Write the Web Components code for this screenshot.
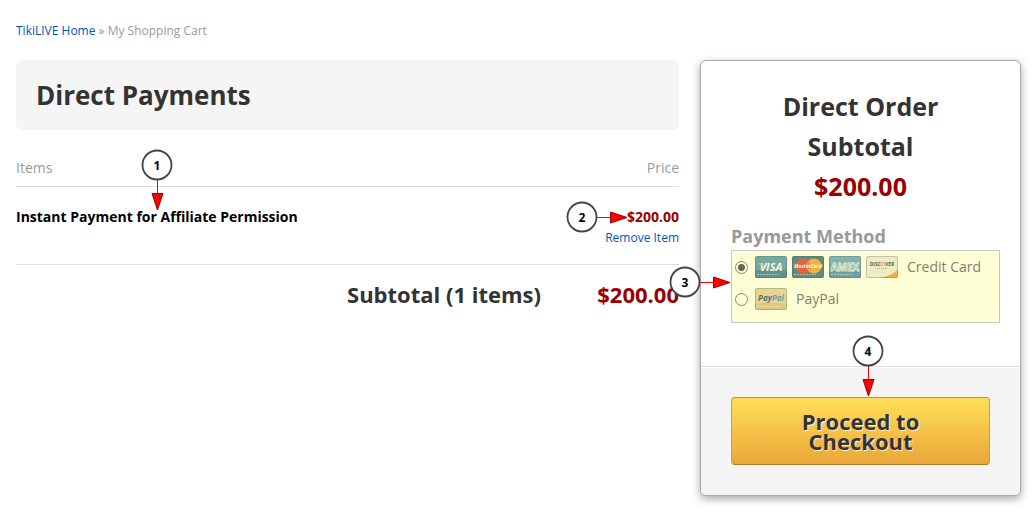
<!DOCTYPE html>
<html lang="en">
<head>
<meta charset="utf-8">
<title>My Shopping Cart</title>
<style>
body { margin: 0; background: #fff; color: #333; font: 14px/20px "Open Sans", sans-serif; }
</style>
</head>
<body>
<cart-page>
  <bread-crumb slot="crumbs"></bread-crumb>
  <cart-heading slot="main">Direct Payments</cart-heading>
  <cart-items slot="main"></cart-items>
  <order-summary slot="aside"></order-summary>
</cart-page>
<script>
function define(name, html) {
  const template = document.createElement('template');
  template.innerHTML = html;
  customElements.define(name, class extends HTMLElement {
    constructor() {
      super();
      this.attachShadow({ mode: 'open' }).append(template.content.cloneNode(true));
    }
  });
}

define('cart-page', `
<style>
  :host { display: block; padding: 21px 12px 24px 16px; }
  .columns { display: grid; grid-template-columns: minmax(0, 1fr) 321px; gap: 21px; align-items: start; margin-top: 19px; }
</style>
<slot name="crumbs"></slot>
<div class="columns"><main><slot name="main"></slot></main><aside><slot name="aside"></slot></aside></div>`);

define('bread-crumb', `
<style>
  :host { display: block; font-size: 12px; line-height: 20px; color: #999; }
  a { color: #0055bb; text-decoration: none; }
</style>
<nav aria-label="Breadcrumb"><a href="#home">TikiLIVE Home</a> » My Shopping Cart</nav>`);

define('cart-heading', `
<style>
  :host { display: block; background: #f5f5f5; border-radius: 6px; padding: 15px 20px; }
  h1 { margin: 0; font-size: 26px; line-height: 40px; color: #333; }
</style>
<h1><slot></slot></h1>`);

/* Numbered marker with an arrow that points down or right */
customElements.define('step-callout', class extends HTMLElement {
  constructor() {
    super();
    const down = this.getAttribute('direction') === 'down';
    const arrow = down
      ? '<path d="M16.500 31V46" stroke="#f00"/><path d="M11 44.500H22L16.500 61Z" fill="#f00" stroke="#900"/>'
      : '<path d="M31 16.500H46" stroke="#f00"/><path d="M44.500 11V22L61 16.500Z" fill="#f00" stroke="#900"/>';
    this.attachShadow({ mode: 'open' }).innerHTML = `
      <style>
        :host { display: block; position: absolute; z-index: 2; pointer-events: none; }
        svg { display: block; }
        text { font: bold 12px "Open Sans", sans-serif; fill: #000; }
      </style>
      <svg width="${down ? 32 : 62}" height="${down ? 62 : 32}">
        ${arrow}
        <circle cx="16" cy="16" r="14.500" fill="#fff" stroke="#444" stroke-width="1.800"/>
        <text x="16" y="21" text-anchor="middle">${this.getAttribute('step')}</text>
      </svg>`;
  }
});

define('cart-items', `
<style>
  :host { display: block; margin-top: 28px; }
  table { width: 100%; border-collapse: collapse; }
  th, td { padding: 0; text-align: left; vertical-align: top; }
  .num { text-align: right; }
  thead th { font-weight: 400; color: #999; padding-bottom: 8px; border-bottom: 1px solid #ddd; }
  tbody th, tbody td { position: relative; padding: 20px 0 15px; border-bottom: 1px solid #ddd; }
  tbody th { color: #000; }
  .price { font-weight: 700; color: #900; }
  .remove { display: block; font-size: 12px; line-height: 22px; color: #0055bb; text-decoration: none; }
  tfoot th, tfoot td { font-size: 22px; line-height: 30px; padding-top: 14px; text-align: right; }
  tfoot th { padding-right: 40px; }
  .total { width: 98px; }
  .first { left: 125px; top: -38px; }
  .second { right: 51px; top: 14px; }
</style>
<table>
  <thead><tr><th scope="col">Items</th><th scope="col" class="num total">Price</th></tr></thead>
  <tbody><tr>
    <th scope="row">Instant Payment for Affiliate Permission<step-callout class="first" step="1" direction="down"></step-callout></th>
    <td class="num"><span class="price">$200.00</span><a class="remove" href="#remove">Remove Item</a><step-callout class="second" step="2" direction="right"></step-callout></td>
  </tr></tbody>
  <tfoot><tr><th scope="row">Subtotal (1 items)</th><td class="price">$200.00</td></tr></tfoot>
</table>`);

const cardArt = {
  visa: `<rect width="32" height="22" rx="2" fill="#76a8a4"/><path d="M0 14H32V20a2 2 0 0 1-2 2H2a2 2 0 0 1-2-2Z" fill="#5f9092"/>
    <text x="16" y="15" text-anchor="middle" fill="#f8fad8" font-size="11" font-weight="700" font-style="italic">VISA</text><path d="M3 7h4l1 3Z" fill="#eec46a"/>`,
  mastercard: `<rect width="32" height="22" rx="2" fill="#5f8a80"/><circle cx="11" cy="10" r="7.500" fill="#e3653b"/><circle cx="22" cy="10" r="7.500" fill="#f3b143"/>
    <path d="M16.500 5V15M15 7h4M15 13h4" stroke="#e98b3d"/><text x="16" y="12" text-anchor="middle" fill="#fff9d5" font-size="5" font-weight="700" font-style="italic">MasterCard</text>`,
  amex: `<rect width="32" height="22" rx="2" fill="#84b2af"/><path d="M0 14H32V20a2 2 0 0 1-2 2H2a2 2 0 0 1-2-2Z" fill="#6d9fa3"/>
    <text x="16" y="15" text-anchor="middle" fill="#78aaa9" stroke="#e3efd1" stroke-width=".8" font-size="10" font-weight="700">AMEX</text>`,
  discover: `<rect width="32" height="22" rx="2" fill="#eeebc4"/><path d="M12 22C21 21 28 18 32 13V20a2 2 0 0 1-2 2Z" fill="#f5ac4c"/>
    <text x="16" y="10" text-anchor="middle" fill="#66664f" font-size="5" font-weight="700">DISC<tspan fill="#f0a045">O</tspan>VER</text><path d="M11 12.500h9" stroke="#b1b08d" stroke-dasharray="1 1"/>`,
  paypal: `<rect width="32" height="22" rx="2" fill="#e8d592"/><path d="M0 15H32V20a2 2 0 0 1-2 2H2a2 2 0 0 1-2-2Z" fill="#dfc982"/>
    <text x="16" y="13" text-anchor="middle" fill="#586e6b" font-size="8" font-weight="700" font-style="italic">Pay<tspan fill="#789f9b">Pal</tspan></text>`
};
customElements.define('pay-card', class extends HTMLElement {
  constructor() {
    super();
    const brand = this.getAttribute('brand');
    this.attachShadow({ mode: 'open' }).innerHTML = `
      <style>:host { display: block; } svg { display: block; } text { font-family: "Open Sans", sans-serif; }</style>
      <svg width="32" height="22" role="img" aria-label="${brand}">${cardArt[brand]}
        <path d="M2 18.500H24" stroke="#fffbd0" stroke-opacity=".5" stroke-dasharray="2 1"/>
        <rect x=".5" y=".5" width="31" height="21" rx="2" fill="none" stroke="#4b665b" stroke-opacity=".3"/>
      </svg>`;
  }
});

define('payment-options', `
<style>
  :host { display: block; }
  fieldset { margin: 0; padding: 0; border: 0; min-width: 0; }
  legend { padding: 0; font-size: 18px; line-height: 26px; font-weight: 700; color: #999; }
  .options { position: relative; box-sizing: border-box; margin: 1px -10px 0 0; height: 73px; padding: 0 3px; border: 1px solid #c8c8c0; background: #ffffd5; }
  label { display: flex; align-items: center; gap: 5px; height: 32px; color: #7f7f68; }
  input { appearance: none; width: 13px; height: 13px; margin: 0 2px 0 0; border: 1px solid #8a8a70; border-radius: 50%; background: #ffffd5; }
  input:checked { background: radial-gradient(circle, #66664f 3px, #ffffd5 4px); }
  span { margin-left: 4px; }
  step-callout { left: -63px; top: 15px; }
</style>
<fieldset>
  <legend>Payment Method</legend>
  <div class="options">
    <label><input type="radio" name="method" checked><pay-card brand="visa"></pay-card><pay-card brand="mastercard"></pay-card><pay-card brand="amex"></pay-card><pay-card brand="discover"></pay-card><span>Credit Card</span></label>
    <label><input type="radio" name="method"><pay-card brand="paypal"></pay-card><span>PayPal</span></label>
    <step-callout step="3" direction="right"></step-callout>
  </div>
</fieldset>`);

define('order-summary', `
<style>
  :host { display: block; border: 1px solid #aaa; border-radius: 6px; background: #fff; box-shadow: 0 3px 8px rgba(0, 0, 0, .35); }
  .details { padding: 25px 30px 43px; }
  h2, .amount { margin: 0; font-size: 25px; line-height: 40px; font-weight: 700; text-align: center; }
  .amount { color: #900; }
  payment-options { margin-top: 17px; }
  .checkout { position: relative; padding: 30px; border-top: 1px solid #ddd; border-radius: 0 0 5px 5px; background: #f4f4f4; box-shadow: inset 0 1px #fff; }
  button { display: block; width: 100%; padding: 13px 60px; border: 1px solid; border-color: #c98f2b #d59c36 #b57b27; border-radius: 4px;
    background: linear-gradient(#fedf57, #eba63a); color: #333; font: 700 22px/20px "Open Sans", sans-serif; text-shadow: 1px 1px 1px rgba(255, 255, 255, .8); }
  step-callout { left: 151px; top: -32px; }
</style>
<div class="details">
  <h2>Direct Order<br>Subtotal</h2>
  <p class="amount">$200.00</p>
  <payment-options></payment-options>
</div>
<div class="checkout">
  <button type="button">Proceed to Checkout</button>
  <step-callout step="4" direction="down"></step-callout>
</div>`);
</script>
</body>
</html>
